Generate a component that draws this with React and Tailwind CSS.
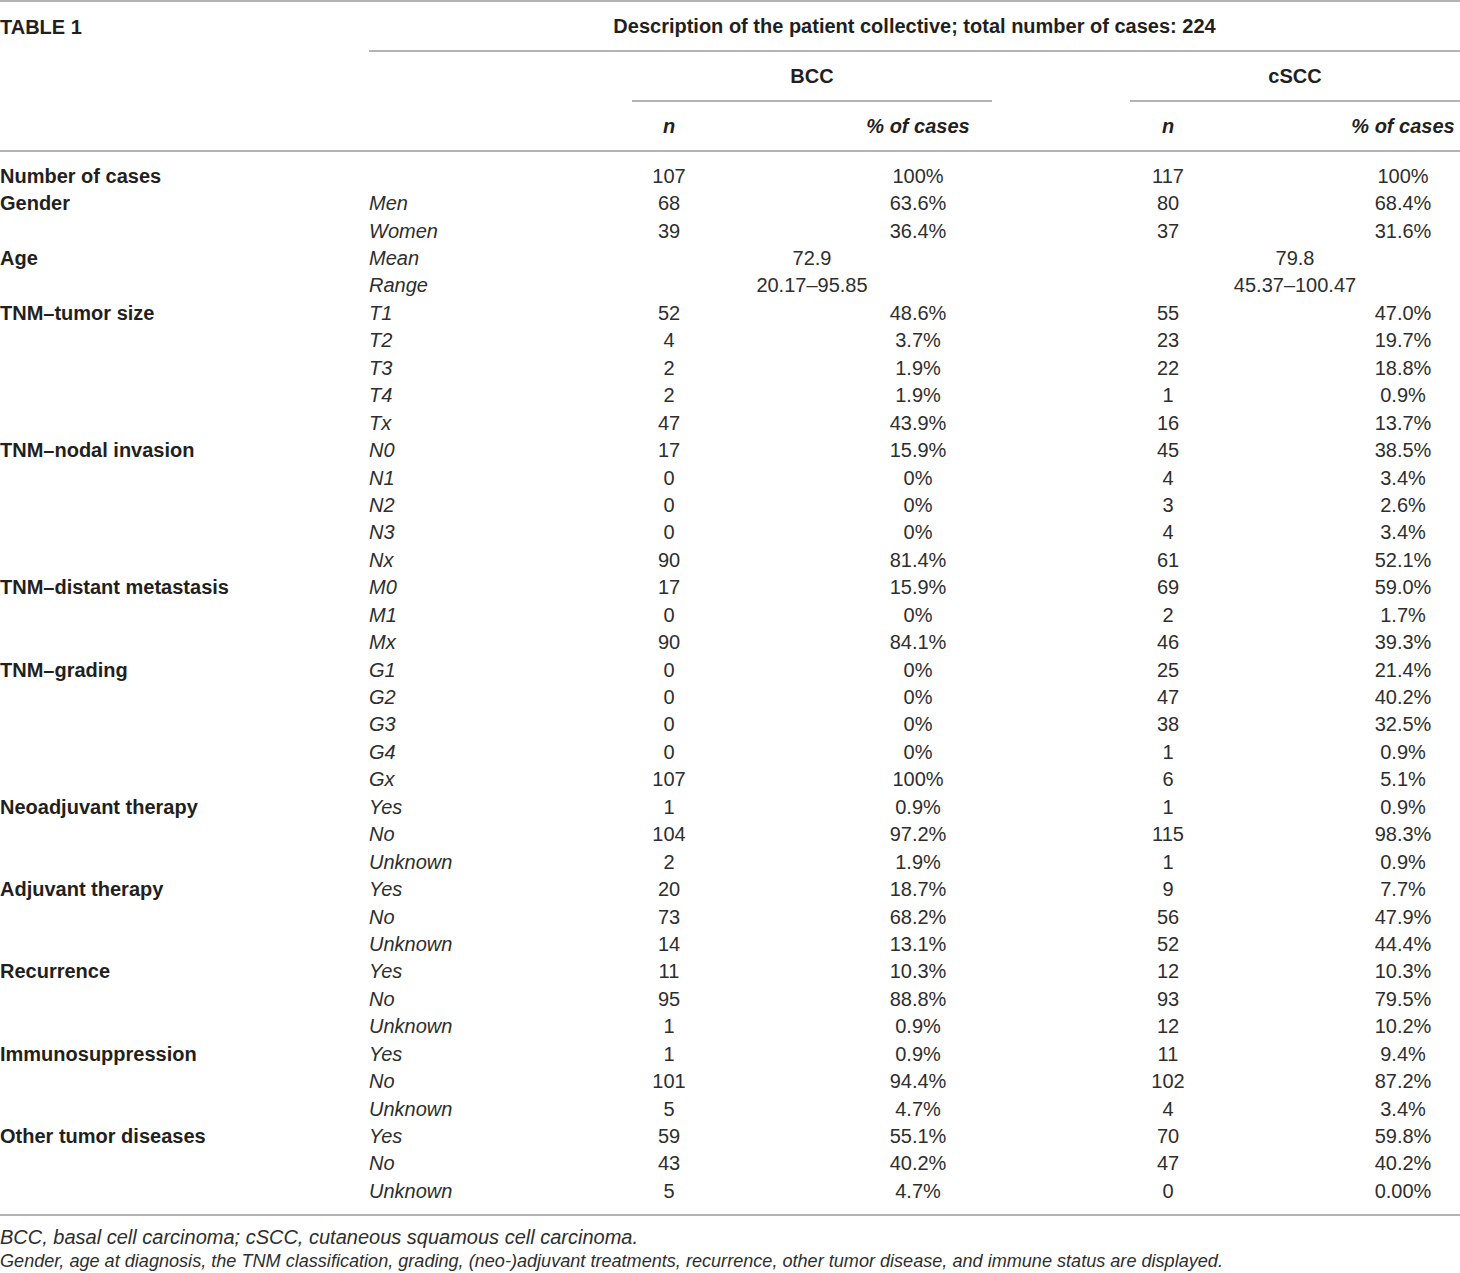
import React from 'react';

const rows = [
  ['Number of cases', '', '107', '100%', '117', '100%'],
  ['Gender', 'Men', '68', '63.6%', '80', '68.4%'],
  ['', 'Women', '39', '36.4%', '37', '31.6%'],
  ['Age', 'Mean', '72.9', null, '79.8', null],
  ['', 'Range', '20.17–95.85', null, '45.37–100.47', null],
  ['TNM–tumor size', 'T1', '52', '48.6%', '55', '47.0%'],
  ['', 'T2', '4', '3.7%', '23', '19.7%'],
  ['', 'T3', '2', '1.9%', '22', '18.8%'],
  ['', 'T4', '2', '1.9%', '1', '0.9%'],
  ['', 'Tx', '47', '43.9%', '16', '13.7%'],
  ['TNM–nodal invasion', 'N0', '17', '15.9%', '45', '38.5%'],
  ['', 'N1', '0', '0%', '4', '3.4%'],
  ['', 'N2', '0', '0%', '3', '2.6%'],
  ['', 'N3', '0', '0%', '4', '3.4%'],
  ['', 'Nx', '90', '81.4%', '61', '52.1%'],
  ['TNM–distant metastasis', 'M0', '17', '15.9%', '69', '59.0%'],
  ['', 'M1', '0', '0%', '2', '1.7%'],
  ['', 'Mx', '90', '84.1%', '46', '39.3%'],
  ['TNM–grading', 'G1', '0', '0%', '25', '21.4%'],
  ['', 'G2', '0', '0%', '47', '40.2%'],
  ['', 'G3', '0', '0%', '38', '32.5%'],
  ['', 'G4', '0', '0%', '1', '0.9%'],
  ['', 'Gx', '107', '100%', '6', '5.1%'],
  ['Neoadjuvant therapy', 'Yes', '1', '0.9%', '1', '0.9%'],
  ['', 'No', '104', '97.2%', '115', '98.3%'],
  ['', 'Unknown', '2', '1.9%', '1', '0.9%'],
  ['Adjuvant therapy', 'Yes', '20', '18.7%', '9', '7.7%'],
  ['', 'No', '73', '68.2%', '56', '47.9%'],
  ['', 'Unknown', '14', '13.1%', '52', '44.4%'],
  ['Recurrence', 'Yes', '11', '10.3%', '12', '10.3%'],
  ['', 'No', '95', '88.8%', '93', '79.5%'],
  ['', 'Unknown', '1', '0.9%', '12', '10.2%'],
  ['Immunosuppression', 'Yes', '1', '0.9%', '11', '9.4%'],
  ['', 'No', '101', '94.4%', '102', '87.2%'],
  ['', 'Unknown', '5', '4.7%', '4', '3.4%'],
  ['Other tumor diseases', 'Yes', '59', '55.1%', '70', '59.8%'],
  ['', 'No', '43', '40.2%', '47', '40.2%'],
  ['', 'Unknown', '5', '4.7%', '0', '0.00%'],
];

// column widths picked so cell centers land where the printed table has them
const cols = 'grid grid-cols-[369px_263px_74px_138px_148px_138px_76px_140px_114px]';

const Row = ({ r }) => (
  <div className={`${cols} h-[27.45px] items-center text-[#2e2e2e]`}>
    <div className="font-bold text-[#231f20]">{r[0]}</div>
    <div className="italic">{r[1]}</div>
    {r[3] === null ? (
      <>
        <div className="col-span-3 text-center">{r[2]}</div>
        <div />
        <div className="col-span-3 text-center">{r[4]}</div>
      </>
    ) : (
      <>
        <div className="text-center">{r[2]}</div>
        <div />
        <div className="text-center">{r[3]}</div>
        <div />
        <div className="text-center">{r[4]}</div>
        <div />
        <div className="text-center">{r[5]}</div>
      </>
    )}
  </div>
);

export default function App() {
  return (
    <div className="w-[1460px] h-[1273px] bg-white text-[#231f20] text-[20px] leading-6 font-['Liberation_Sans',Arial,sans-serif]">
      <div className="border-t-2 border-b-2 border-[#b3b3b3]">
        <div className={`${cols} h-[50px]`}>
          <div className="font-bold flex items-center">TABLE 1</div>
          <div className="col-span-8 border-b-2 border-[#b3b3b3] font-bold flex items-center justify-center">
            Description of the patient collective; total number of cases: 224
          </div>
        </div>
        <div className={`${cols} h-[50px]`}>
          <div />
          <div />
          <div className="col-span-3 border-b-2 border-[#b3b3b3] font-bold flex items-center justify-center">BCC</div>
          <div />
          <div className="col-span-3 border-b-2 border-[#b3b3b3] font-bold flex items-center justify-center">cSCC</div>
        </div>
        <div className={`${cols} h-12 items-center font-bold italic`}>
          <div />
          <div />
          <div className="text-center">n</div>
          <div />
          <div className="text-center">% of cases</div>
          <div />
          <div className="text-center">n</div>
          <div />
          <div className="text-center">% of cases</div>
        </div>
      </div>
      <div className="pt-[10px] pb-[9px] border-b-2 border-[#b3b3b3]">
        {rows.map((r, i) => <Row key={i} r={r} />)}
      </div>
      <div className="pt-[9px] italic text-[#2e2e2e]">
        <p className="text-[20px]">BCC, basal cell carcinoma; cSCC, cutaneous squamous cell carcinoma.</p>
        <p className="text-[18.1px]">Gender, age at diagnosis, the TNM classification, grading, (neo-)adjuvant treatments, recurrence, other tumor disease, and immune status are displayed.</p>
      </div>
    </div>
  );
}
